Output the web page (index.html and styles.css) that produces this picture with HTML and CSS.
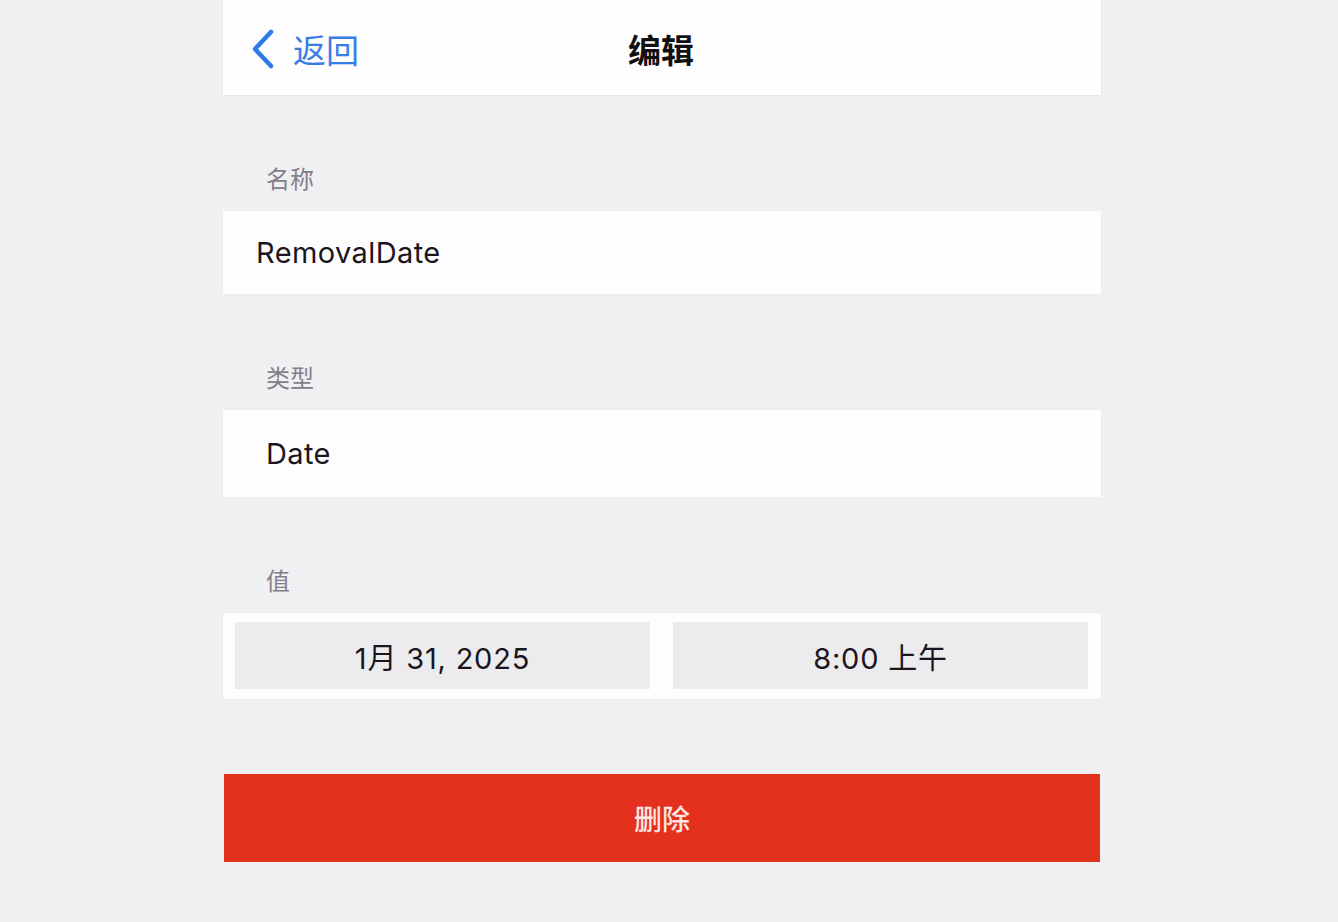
FILE: index.html
```html
<!DOCTYPE html>
<html lang="zh-CN">
<head>
  <meta charset="UTF-8">
  <title>编辑</title>
  <link rel="stylesheet" href="styles.css">
</head>
<body>
  <div class="page">
    <div class="navbar">
      <a class="back" href="#">
        <svg class="chevron" width="26" height="40" viewBox="0 0 26 40">
          <path d="M21 3 L5 20 L21 37" fill="none" stroke="#2f7ae8" stroke-width="4.5" stroke-linecap="round" stroke-linejoin="round"/>
        </svg>
        <span>返回</span>
      </a>
      <div class="title">编辑</div>
    </div>

    <div class="label">名称</div>
    <div class="field name">RemovalDate</div>

    <div class="label">类型</div>
    <div class="field type">Date</div>

    <div class="label">值</div>
    <div class="field value">
      <button class="picker">1月 31, 2025</button>
      <button class="picker">8:00 上午</button>
    </div>

    <button class="delete">删除</button>
  </div>
</body>
</html>
```

FILE: styles.css
```css
html, body {
  margin: 0;
  height: 100%;
}
body {
  background: #f0f0f2;
  font-family: Inter, "Noto Sans CJK SC", sans-serif;
  color: #1c1520;
}
.page {
  width: 878px;
  margin-left: 223px;
}
.navbar {
  height: 95px;
  background: #fefeff;
  box-shadow: 0 1px 2px rgba(0,0,0,0.06);
  display: flex;
  align-items: center;
  position: relative;
}
.back {
  display: flex;
  align-items: center;
  margin-left: 27px;
  color: #3a7ce6;
  text-decoration: none;
  font-family: "Noto Sans CJK SC", sans-serif;
  font-size: 33px;
  margin-top: 2px;
}
.back span {
  margin-left: 17px;
}
.title {
  position: absolute;
  left: 0;
  right: 0;
  text-align: center;
  font-family: "Noto Sans CJK SC", sans-serif;
  font-weight: 700;
  font-size: 33px;
  color: #111;
  margin-left: -2px;
  top: 25px;
  pointer-events: none;
}
.label {
  height: 116px;
  box-sizing: border-box;
  display: flex;
  align-items: flex-end;
  padding: 0 0 17px 43px;
  font-family: "Noto Sans CJK SC", sans-serif;
  font-size: 24px;
  line-height: 32px;
  color: #847e8b;
}
.field {
  background: #fdfdfe;
  box-shadow: 0 0 1px rgba(0,0,0,0.08);
  display: flex;
  align-items: center;
  font-size: 29px;
  letter-spacing: 0.4px;
}
.name {
  height: 83px;
  padding-left: 33px;
}
.type {
  height: 87px;
  padding-left: 43px;
}
.value {
  height: 86px;
  box-sizing: border-box;
  padding: 9px 13px 10px 12px;
  gap: 23px;
}
.picker {
  flex: 1;
  height: 67px;
  border: none;
  background: #ececee;
  font-family: Inter, "Noto Sans CJK SC", sans-serif;
  font-size: 29px;
  letter-spacing: 0.8px;
  color: #1c1520;
  cursor: pointer;
}
.delete {
  display: block;
  width: 876px;
  height: 88px;
  margin: 75px 0 0 1px;
  border: none;
  background: #e3311d;
  color: #fbe6e2;
  font-family: "Noto Sans CJK SC", sans-serif;
  font-weight: 500;
  font-size: 28px;
  cursor: pointer;
}
```
